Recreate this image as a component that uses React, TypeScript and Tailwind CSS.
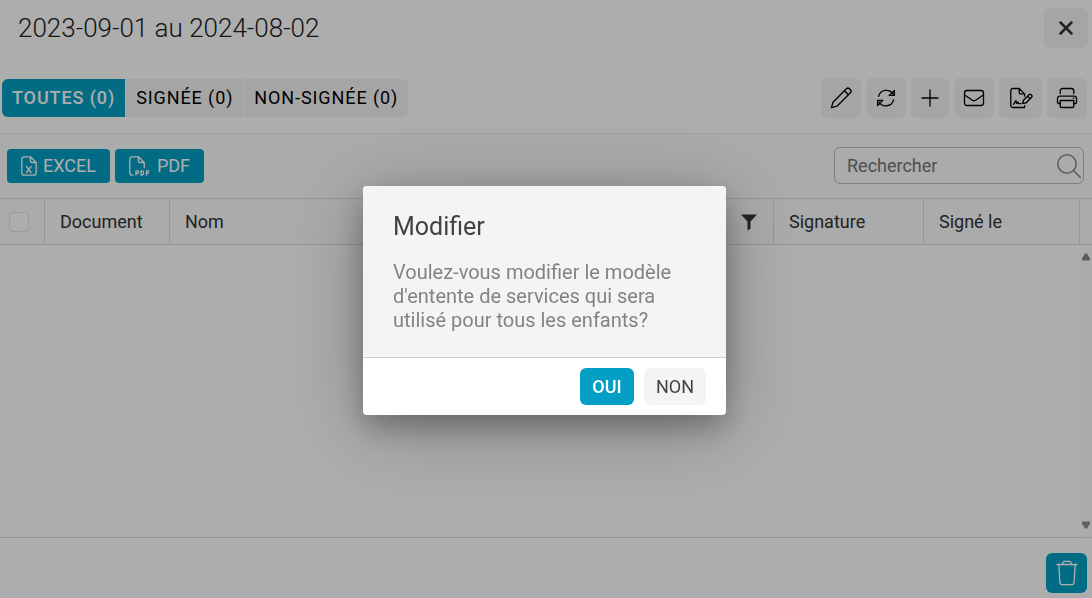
import type { ReactNode } from "react";

const tabs = [
  { label: "TOUTES (0)", active: true },
  { label: "SIGNÉE (0)", active: false },
  { label: "NON-SIGNÉE (0)", active: false },
];

function Icon({
  children,
  className = "size-6",
  viewBox = "0 0 24 24",
}: {
  children: ReactNode;
  className?: string;
  viewBox?: string;
}) {
  return (
    <svg
      viewBox={viewBox}
      className={className}
      fill="none"
      stroke="currentColor"
      strokeWidth="1.3"
      strokeLinecap="round"
      strokeLinejoin="round"
      aria-hidden="true"
    >
      {children}
    </svg>
  );
}

function ToolButton({
  label,
  width = "w-10",
  children,
}: {
  label: string;
  width?: string;
  children: ReactNode;
}) {
  return (
    <button
      type="button"
      aria-label={label}
      className={`flex h-10 items-center justify-center rounded-md bg-[#f4f4f4] text-black ${width}`}
    >
      {children}
    </button>
  );
}

function Toolbar() {
  return (
    <div className="flex gap-[5px]">
      <ToolButton label="Modifier">
        <Icon>
          <path d="M2.4 21.6 4 16.2 17.4 2.8a2.2 2.2 0 0 1 3.1 0l.9.9a2.2 2.2 0 0 1 0 3.1L8 20.2 2.4 21.6ZM15.4 4.8l4 4" />
        </Icon>
      </ToolButton>
      <ToolButton label="Actualiser">
        <Icon>
          <path d="M4.6 10.4a8 8 0 0 1 14.6-2.2M20.4 4.4v5h-5.2ZM19.6 13.8A8 8 0 0 1 5 16M3.6 19.6v-5.2h5.2Z" />
        </Icon>
      </ToolButton>
      <ToolButton label="Ajouter" width="w-[38px]">
        <Icon>
          <path d="M12 4v16M4 12h16" />
        </Icon>
      </ToolButton>
      <ToolButton label="Envoyer par courriel">
        <Icon>
          <rect x="2.5" y="4.5" width="19" height="15" rx="2.5" />
          <path d="m2.7 9 7.6 5.2a3 3 0 0 0 3.4 0L21.3 9" />
        </Icon>
      </ToolButton>
      <ToolButton label="Signer" width="w-[43px]">
        <Icon>
          <path d="M15.6 21.5H3.8a2 2 0 0 1-2-2v-15a2 2 0 0 1 2-2h6.4l5.4 5.4v2.3M10.2 2.5v4.2a1.2 1.2 0 0 0 1.2 1.2h4.2M15.6 21.5v-1.8" />
          <path d="m13.6 17.4.9-3.2 5.5-5.5a1.5 1.5 0 0 1 2.1 0l.5.5a1.5 1.5 0 0 1 0 2.1l-5.7 5.7ZM18.5 10.2l2.5 2.5" />
          <path d="M4.6 18.2c1-.2 1.5-3.6 2.3-3.6.7 0 0 3 .7 3 .6 0 .9-1.4 1.4-1.4.6 0 .4 1.4 1 1.4h2" />
        </Icon>
      </ToolButton>
      <ToolButton label="Imprimer">
        <Icon>
          <path d="M5.2 7.5V5a2.5 2.5 0 0 1 2.5-2.5h8.6A2.5 2.5 0 0 1 18.8 5v2.5" />
          <path d="M5 17.5H3.7a1.2 1.2 0 0 1-1.2-1.2v-4a2.2 2.2 0 0 1 2.2-2.2h14.6a2.2 2.2 0 0 1 2.2 2.2v4a1.2 1.2 0 0 1-1.2 1.2H19" />
          <path d="M5.2 14.5h13.6v5.8a1.2 1.2 0 0 1-1.2 1.2H6.4a1.2 1.2 0 0 1-1.2-1.2ZM18.3 12.2h.4" />
        </Icon>
      </ToolButton>
    </div>
  );
}

function DocumentsTable() {
  const cell = "border-y border-r border-[#dedede] px-[15px] text-left font-normal";

  return (
    <table className="w-full table-fixed border-separate border-spacing-0 text-lg text-[#333]">
      <thead>
        <tr className="h-[47px] bg-[#fcfcfc]">
          <th className="w-[45px] border-y border-r border-[#dedede] pl-[9px] text-left">
            <input
              type="checkbox"
              aria-label="Tout sélectionner"
              className="block size-5 appearance-none rounded border border-[#e5e5e5] bg-white"
            />
          </th>
          <th className={`w-[125px] ${cell}`}>Document</th>
          <th className={cell}>
            <div className="flex items-center justify-between">
              Nom
              <button type="button" aria-label="Filtrer">
                <svg viewBox="0 0 18 18" className="size-[18px]" fill="#333" aria-hidden="true">
                  <path d="M1 1.5h16L10.5 8.5V15.5L7.5 17.5V8.5Z" />
                </svg>
              </button>
            </div>
          </th>
          <th className={`w-[150px] ${cell}`}>Signature</th>
          <th className={`w-[156px] ${cell}`}>Signé le</th>
          <th className="w-3 border-y border-[#dedede]" aria-hidden="true" />
        </tr>
      </thead>
    </table>
  );
}

function ConfirmDialog() {
  return (
    <div className="fixed inset-0 flex items-center justify-center bg-black/32 pt-[3px] pr-[3px]">
      <div
        role="dialog"
        aria-modal="true"
        aria-labelledby="dialog-title"
        className="w-[363px] overflow-hidden rounded bg-white shadow-[0_12px_28px_rgba(0,0,0,0.26),0_12px_80px_rgba(0,0,0,0.28)]"
      >
        <div className="border-b border-[#d0d0d0] bg-[#f4f4f4] px-[30px] pt-6 pb-[25px]">
          <h2 id="dialog-title" className="text-[25px] leading-[34px] text-[#424242]">
            Modifier
          </h2>
          <p className="mt-4 text-xl leading-6 text-[#838383]">
            Voulez-vous modifier le modèle d'entente de services qui sera utilisé pour tous les
            enfants?
          </p>
        </div>
        <div className="flex justify-end gap-2.5 px-5 py-2.5 text-lg">
          <button
            type="button"
            className="h-[37px] w-[54px] rounded-md bg-[#049fc5] font-medium text-white"
          >
            OUI
          </button>
          <button type="button" className="h-[37px] w-[62px] rounded-md bg-[#f4f4f4] text-[#424242]">
            NON
          </button>
        </div>
      </div>
    </div>
  );
}

export default function App() {
  return (
    <div className="flex min-h-screen flex-col bg-white font-['Roboto','Liberation_Sans',sans-serif]">
      <header className="flex items-start justify-between pt-2 pr-1 pl-[18px]">
        <h1 className="text-[26px] leading-10 font-light text-[#222]">2023-09-01 au 2024-08-02</h1>
        <button
          type="button"
          aria-label="Fermer"
          className="flex h-10 w-11 items-center justify-center rounded-md bg-[#f4f4f4] text-[#333]"
        >
          <svg
            viewBox="0 0 14 14"
            className="size-3.5"
            stroke="currentColor"
            strokeWidth="2.5"
            strokeLinecap="round"
            aria-hidden="true"
          >
            <path d="m1.5 1.5 11 11M12.5 1.5l-11 11" />
          </svg>
        </button>
      </header>

      <div className="mt-[30px] flex items-center justify-between border-b border-[#ebebeb] pr-[5px] pb-[15px] pl-0.5">
        <div className="flex gap-px overflow-hidden rounded-md text-lg">
          {tabs.map((tab) => (
            <button
              key={tab.label}
              type="button"
              className={`h-[38px] px-2.5 tracking-wider ${tab.active ? "bg-[#049fc5] font-medium text-white" : "bg-[#f4f4f4] text-black"}`}
            >
              {tab.label}
            </button>
          ))}
        </div>
        <Toolbar />
      </div>

      <div className="flex items-center justify-between bg-[#fcfcfc] pt-[13px] pr-2 pb-3.5 pl-[7px]">
        <div className="flex gap-[5px] text-lg text-white">
          <button type="button" className="flex h-[34px] items-center gap-1.5 rounded bg-[#049fc5] px-3.5">
            <Icon className="h-5 w-4" viewBox="0 0 16 20">
              <path d="M3 .8h6.5L15.2 6.5V17a2.2 2.2 0 0 1-2.2 2.2H3A2.2 2.2 0 0 1 .8 17V3A2.2 2.2 0 0 1 3 .8ZM9.5.8v4.5a1.2 1.2 0 0 0 1.2 1.2h4.5M5.5 10.5l4.6 6M10.1 10.5l-4.6 6" />
            </Icon>
            EXCEL
          </button>
          <button type="button" className="flex h-[34px] items-center gap-1.5 rounded bg-[#049fc5] px-3.5">
            <Icon className="h-5 w-[22px]" viewBox="0 0 22 20">
              <path d="M4 19.2H3A2.2 2.2 0 0 1 .8 17V3A2.2 2.2 0 0 1 3 .8h6.5l5.7 5.7v5M9.5.8v4.5a1.2 1.2 0 0 0 1.2 1.2h4.5" />
              <path d="M7 19v-4.2h1.4a1.2 1.2 0 0 1 0 2.6H7M12 14.8h1a1.5 1.5 0 0 1 1.5 1.5v1.2A1.5 1.5 0 0 1 13 19h-1ZM17.500 19v-4.200H20M17.500 17h2" />
            </Icon>
            PDF
          </button>
        </div>
        <div className="flex h-[37px] w-[250px] items-center rounded-md border border-[#bbb] pr-0.5 pl-3">
          <input
            type="search"
            aria-label="Rechercher"
            placeholder="Rechercher"
            className="min-w-0 flex-1 bg-transparent text-lg outline-none placeholder:text-[#757575]"
          />
          <svg
            viewBox="0 0 24 24"
            className="size-6 text-[#8a8a90]"
            fill="none"
            stroke="currentColor"
            strokeWidth="1.6"
            strokeLinecap="round"
            aria-hidden="true"
          >
            <circle cx="10" cy="10" r="9.2" />
            <path d="m16.7 16.7 6.5 6.5" />
          </svg>
        </div>
      </div>

      <DocumentsTable />

      <div className="flex flex-1 justify-end">
        <div className="flex w-3 flex-col items-end justify-between bg-[#fcfcfc] py-2 pr-0.5">
          <svg viewBox="0 0 8 8" className="size-2" fill="#8b8b8b" aria-hidden="true">
            <path d="M3 .5h2L8 5.5V7.5H0V5.5Z" />
          </svg>
          <svg viewBox="0 0 8 8" className="size-2" fill="#8b8b8b" aria-hidden="true">
            <path d="M3 7.5h2L8 2.5V.5H0V2.5Z" />
          </svg>
        </div>
      </div>

      <footer className="flex justify-end border-t border-[#dedede] pt-[15px] pr-[5px] pb-[5px]">
        <button
          type="button"
          aria-label="Supprimer"
          className="flex h-10 w-[41px] items-center justify-center rounded-md bg-[#049fc5] text-white"
        >
          <Icon className="h-[26px] w-[22px]" viewBox="0 0 22 26">
            <path d="M1 4.5h20M6 4.5 7.2 2.2A1.5 1.5 0 0 1 8.5 1.4h5a1.5 1.5 0 0 1 1.3.8L16 4.5M2.8 4.5l1.1 18a2.2 2.2 0 0 0 2.2 2.1h9.8a2.2 2.2 0 0 0 2.2-2.1l1.1-18" />
          </Icon>
        </button>
      </footer>

      <ConfirmDialog />
    </div>
  );
}
